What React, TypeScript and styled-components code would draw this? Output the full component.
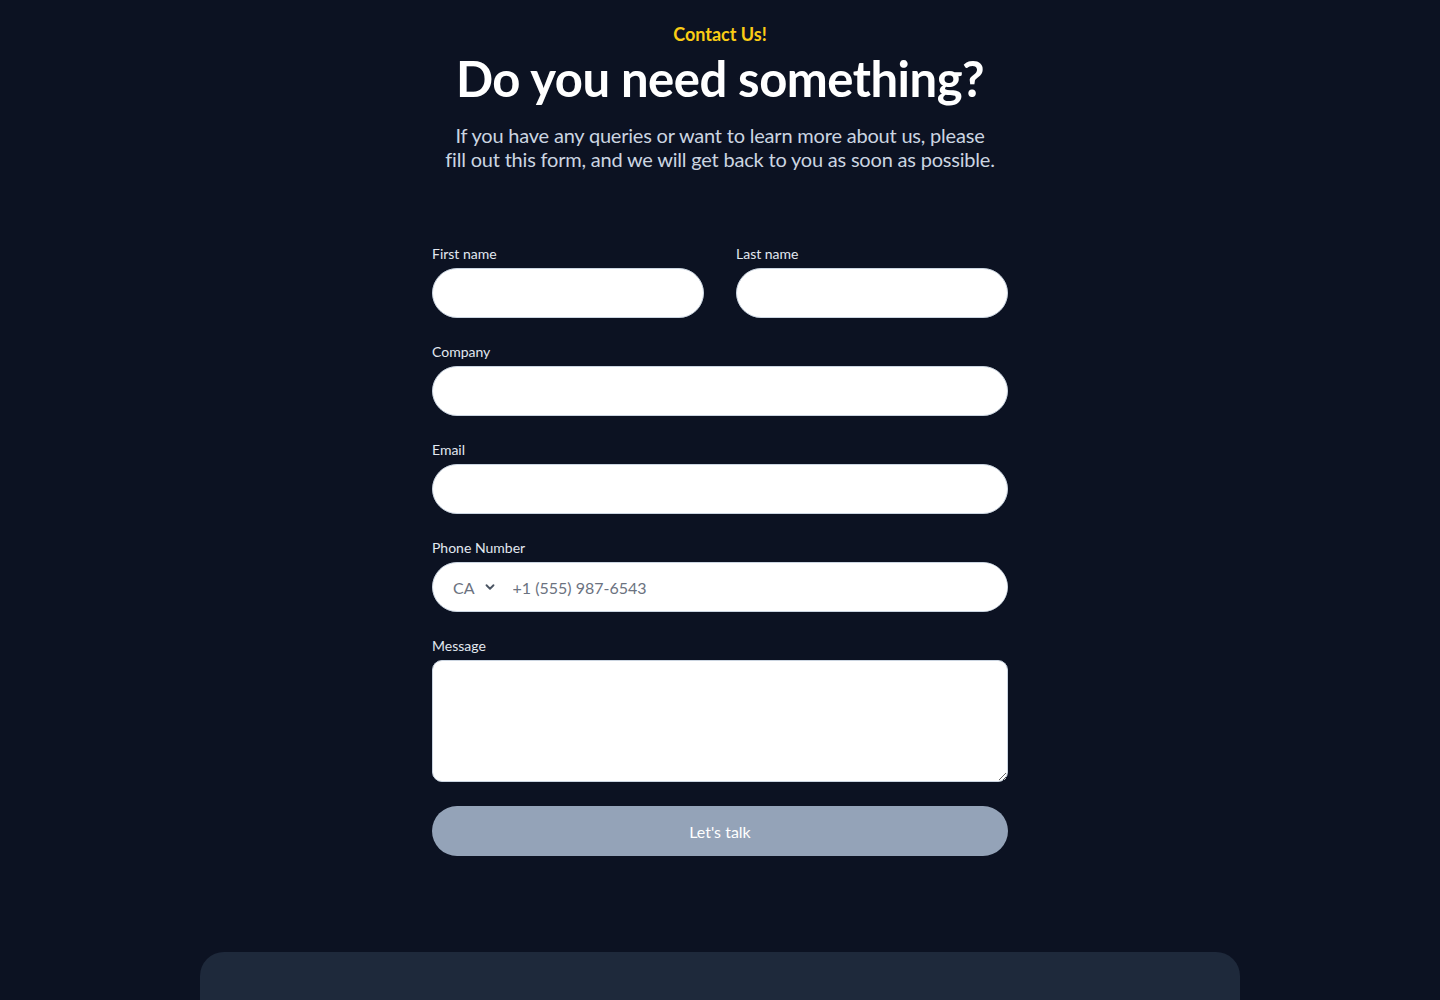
import * as React from "react";
import styled, { createGlobalStyle } from "styled-components";

const GlobalStyle = createGlobalStyle`
  html, body {
    margin: 0;
    padding: 0;
    background: #0c1222;
    font-family: "Lato", "Open Sans", sans-serif;
    color: #ffffff;
  }
  * { box-sizing: border-box; }
`;

const Page = styled.main`
  min-height: 1000px;
  display: flex;
  flex-direction: column;
  align-items: center;
  padding-top: 20px;
  overflow: hidden;
`;

const Header = styled.header`
  display: flex;
  flex-direction: column;
  align-items: center;
  text-align: center;
`;

const Eyebrow = styled.p`
  margin: 0;
  font-size: 18px;
  line-height: 28px;
  font-weight: 700;
  color: #facc15;
`;

const Title = styled.h1`
  margin: 2px 0 0;
  font-size: 49px;
  line-height: 56px;
  font-weight: 700;
  letter-spacing: -0.5px;
  color: #ffffff;
`;

const Lead = styled.p`
  margin: 17px 0 0;
  font-size: 20px;
  line-height: 24px;
  color: #cbd5e1;
  letter-spacing: -0.2px;
`;

const Form = styled.form`
  width: 576px;
  margin-top: 73px;
  display: flex;
  flex-direction: column;
  gap: 24px;
`;

const Row = styled.div`
  display: grid;
  grid-template-columns: 1fr 1fr;
  column-gap: 32px;
`;

const Field = styled.label`
  display: flex;
  flex-direction: column;
  gap: 4px;
`;

const Label = styled.span`
  font-size: 14px;
  line-height: 20px;
  color: #e2e8f0;
`;

const Input = styled.input`
  height: 50px;
  width: 100%;
  border: 1px solid #cbd5e1;
  border-radius: 9999px;
  background: #ffffff;
  padding: 0 20px;
  font: inherit;
  font-size: 16px;
  color: #111827;
  outline: none;
`;

const PhoneBox = styled.div`
  height: 50px;
  display: flex;
  align-items: center;
  border: 1px solid #cbd5e1;
  border-radius: 9999px;
  background: #ffffff;
  overflow: hidden;
`;

const CountrySelect = styled.div`
  display: flex;
  align-items: center;
  gap: 8px;
  padding: 0 8px 0 20px;
  height: 100%;
  font-size: 16px;
  color: #6b7280;
`;

const PhoneInput = styled.input`
  flex: 1;
  height: 100%;
  border: none;
  outline: none;
  padding: 0 12px 0 8px;
  font: inherit;
  font-size: 16px;
  color: #111827;
  &::placeholder { color: #6b7280; }
`;

const TextArea = styled.textarea`
  height: 122px;
  width: 100%;
  border: 1px solid #cbd5e1;
  border-radius: 10px;
  background: #ffffff;
  padding: 12px 20px;
  font: inherit;
  font-size: 16px;
  outline: none;
  resize: vertical;
`;

const Submit = styled.button`
  height: 50px;
  width: 100%;
  border: none;
  border-radius: 9999px;
  background: #94a3b8;
  color: #ffffff;
  font: inherit;
  font-size: 16px;
  cursor: pointer;
`;

const BottomCard = styled.section`
  width: 1040px;
  height: 200px;
  margin-top: 96px;
  background: #1e293b;
  border-radius: 24px;
`;

function Chevron() {
  return (
    <svg width="14" height="14" viewBox="0 0 24 24" fill="none" stroke="#4b5563" strokeWidth="3.2" strokeLinecap="round" strokeLinejoin="round">
      <path d="m6 9 6 6 6-6" />
    </svg>
  );
}

export default function App() {
  return (
    <>
      <GlobalStyle />
      <Page>
        <Header>
          <Eyebrow>Contact Us!</Eyebrow>
          <Title>Do you need something?</Title>
          <Lead>
            If you have any queries or want to learn more about us, please
            <br />
            fill out this form, and we will get back to you as soon as possible.
          </Lead>
        </Header>
        <Form onSubmit={(e) => e.preventDefault()}>
          <Row>
            <Field>
              <Label>First name</Label>
              <Input type="text" />
            </Field>
            <Field>
              <Label>Last name</Label>
              <Input type="text" />
            </Field>
          </Row>
          <Field>
            <Label>Company</Label>
            <Input type="text" />
          </Field>
          <Field>
            <Label>Email</Label>
            <Input type="email" />
          </Field>
          <Field>
            <Label>Phone Number</Label>
            <PhoneBox>
              <CountrySelect>
                CA <Chevron />
              </CountrySelect>
              <PhoneInput type="tel" placeholder="+1 (555) 987-6543" />
            </PhoneBox>
          </Field>
          <Field>
            <Label>Message</Label>
            <TextArea />
          </Field>
          <Submit type="submit">Let's talk</Submit>
        </Form>
        <BottomCard />
      </Page>
    </>
  );
}
